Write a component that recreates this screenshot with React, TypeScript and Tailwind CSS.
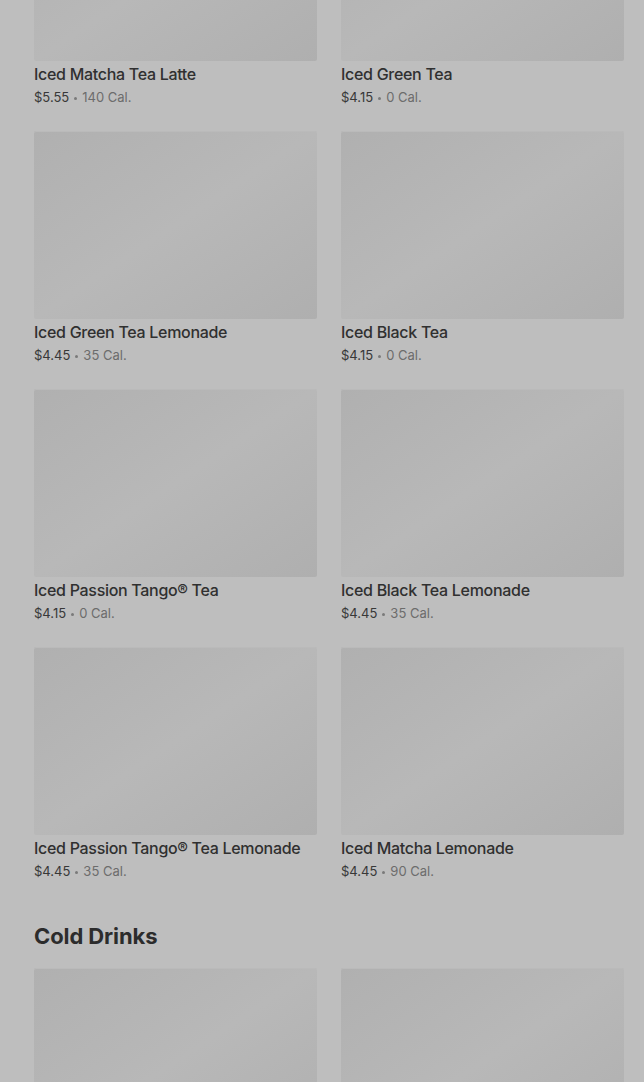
const teas = [
  { name: "Iced Matcha Tea Latte", price: "$5.55", cal: "140 Cal." },
  { name: "Iced Green Tea", price: "$4.15", cal: "0 Cal." },
  { name: "Iced Green Tea Lemonade", price: "$4.45", cal: "35 Cal." },
  { name: "Iced Black Tea", price: "$4.15", cal: "0 Cal." },
  { name: "Iced Passion Tango® Tea", price: "$4.15", cal: "0 Cal." },
  { name: "Iced Black Tea Lemonade", price: "$4.45", cal: "35 Cal." },
  { name: "Iced Passion Tango® Tea Lemonade", price: "$4.45", cal: "35 Cal." },
  { name: "Iced Matcha Lemonade", price: "$4.45", cal: "90 Cal." },
];

function Placeholder() {
  return <div className="h-[188px] rounded-[2px] bg-linear-to-br from-[#b0b0b0] via-[#b8b8b8] to-[#afafaf] shadow-[inset_0_1px_0_#bababa]" />;
}

function ItemCard({ name, price, cal }: { name: string; price: string; cal: string }) {
  return (
    <div className="flex flex-col">
      <Placeholder />
      <div className="mt-px text-[16px] leading-6 font-medium text-[#303030] tracking-[-0.3px]">{name}</div>
      <div className="mt-[2px] mb-[-1px] flex h-5 items-center gap-[5px] text-[13px] text-[#6c6c6c]">
        <span className="text-[#383838]">{price}</span>
        <span className="h-[3px] w-[3px] rounded-full bg-[#7a7a7a]" />
        <span>{cal}</span>
      </div>
    </div>
  );
}

export default function App() {
  return (
    <div className="h-[1082px] overflow-hidden bg-[#bebebe] font-['Inter',sans-serif]">
      <div className="mt-[-127px] pl-[34px] pr-[20px]">
        <div className="grid grid-cols-2 gap-x-6 gap-y-6">
          {teas.map((t) => (
            <ItemCard key={t.name} {...t} />
          ))}
        </div>
        <h2 className="mt-[41px] text-[22px] leading-7 font-bold text-[#2c2c2c] tracking-[-0.1px]">Cold Drinks</h2>
        <div className="mt-[18px] grid grid-cols-2 gap-x-6">
          <Placeholder />
          <Placeholder />
        </div>
      </div>
    </div>
  );
}
